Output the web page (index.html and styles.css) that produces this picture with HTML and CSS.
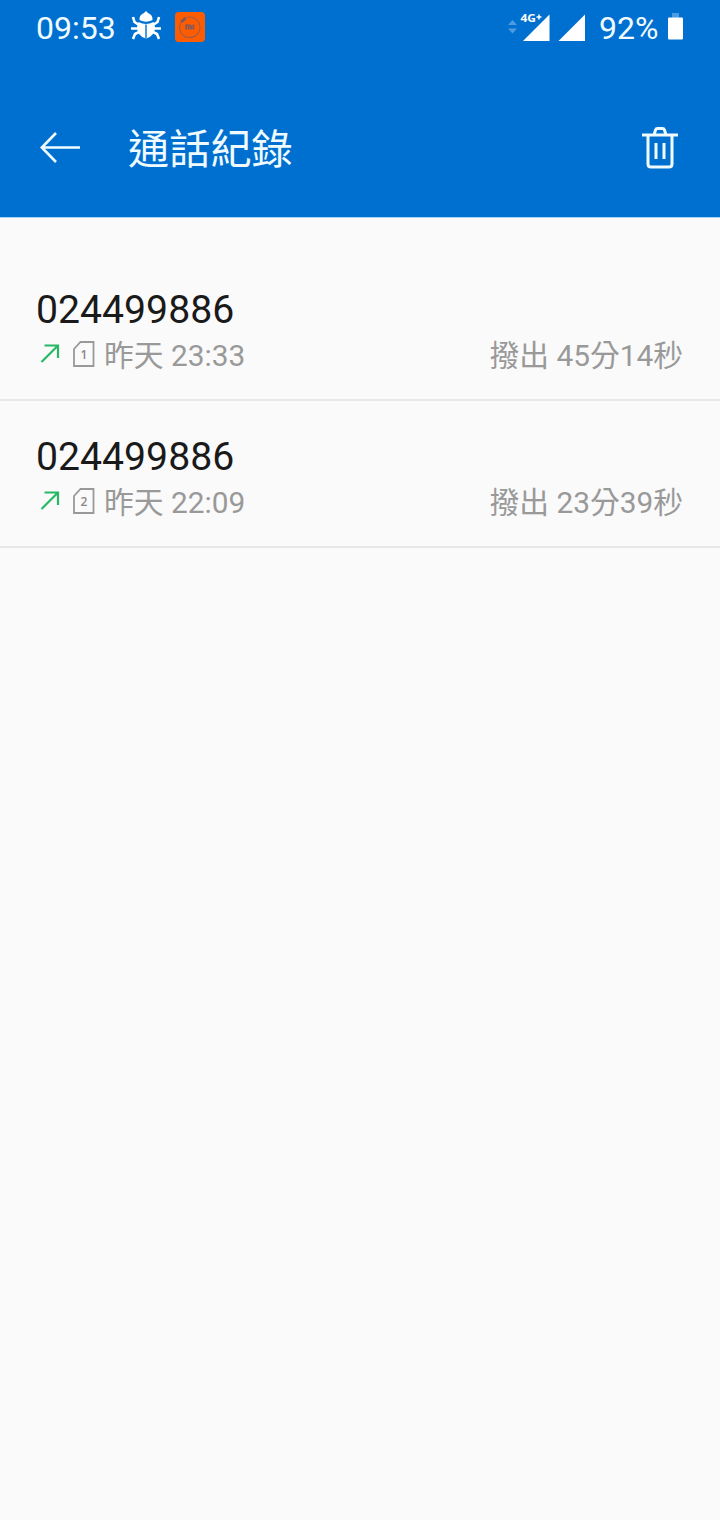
FILE: index.html
```html
<!DOCTYPE html>
<html lang="zh-Hant">
  <head>
    <meta charset="utf-8" />
    <title>通話紀錄</title>
    <meta
      name="viewport"
      content="width=device-width, initial-scale=1.0"
    />
    <link rel="stylesheet" href="styles.css">
  </head>
  <body>
    <header class="header">
      <div class="status-bar">
        <span class="clock">09:53</span>
        <svg class="bug-icon" width="32" height="32" viewBox="0 0 32 32">
          <path d="M9.500 10 Q9 5 14 3 L16 1 L18 3 Q23 5 22.500 10 Q16 13.500 9.500 10Z" fill="#fff" />
          <path d="M8.500 12 Q16 16 23.500 12 L25 17 Q25 26 16 28.500 Q7 26 7 17Z" fill="#fff" />
          <path d="M9 15 L4.500 12 L3 7 M8 18.500 H1 M9 22 L5 24 L3 29 M23 15 L27.500 12 L29 7 M24 18.500 H31 M23 22 L27 24 L29 29" fill="none" stroke="#fff" stroke-width="2.600" />
          <path d="M16 14.500 V28" fill="none" stroke="#0070d0" stroke-width="1.400" />
        </svg>
        <svg class="mi-icon" width="30" height="30" viewBox="0 0 30 30">
          <rect width="30" height="30" rx="4" fill="#ff5c00" />
          <path d="M9.500 6.600 A10.200 10.200 0 1 1 5.800 10.500" fill="none" stroke="#9c5c50" stroke-width="1.100" />
          <path d="M6.300 10 L10.500 5.900" stroke="#755966" stroke-width="2.600" />
          <path d="M11.200 17.500 V13.300 H14.500 Q16 13.300 16 14.800 V17.500 M13.600 14.800 V17.500 M18.400 12.600 V17.500" fill="none" stroke="#755966" stroke-width="1.700" />
        </svg>

        <div class="status-right">
          <svg width="80" height="32" viewBox="0 0 80 32">
            <path d="M3 14 L7.500 9 L12 14Z M3 17.500 L7.500 22.500 L12 17.500Z" fill="#4d9be0" />
            <path d="M18 30 L44.500 3.500 V30Z M53.500 30 L80 3.500 V30Z" fill="#fff" />
            <text class="network" x="15.500" y="11" textLength="15.500" lengthAdjust="spacingAndGlyphs">4G</text>
            <path d="M31.500 6 H36.500 M34 3.500 V8.500" stroke="#fff" stroke-width="1.500" />
          </svg>
          <span class="battery-level">92%</span>
          <svg width="15" height="28" viewBox="0 0 15 28">
            <rect x="4" y="0" width="7" height="5" fill="#4d9be0" />
            <rect x="0" y="4.500" width="15" height="22" rx="1" fill="#fff" />
          </svg>
        </div>
      </div>

      <div class="toolbar">
        <svg width="40" height="32" viewBox="0 0 40 32">
          <path d="M40 15.500 H2 M16 1 L1.800 15.500 L16 30" fill="none" stroke="#f0fbff" stroke-width="2.600" />
        </svg>
        <h1>通話紀錄</h1>
        <svg class="trash-icon" width="36" height="42" viewBox="0 0 36 42">
          <path d="M0 8 H36 M6 8 V37 Q6 40 9 40 H27 Q30 40 30 37 V8 M12 8 L13.500 3 Q14 1.600 15.500 1.600 H20.500 Q22 1.600 22.500 3 L24 8 M14 16 V32 M22 16 V32" fill="none" stroke="#f0fbff" stroke-width="3" />
        </svg>
      </div>
    </header>

    <main class="call-list">
      <div class="call">
        <div class="number">024499886</div>
        <div class="details">
          <svg class="outgoing" width="20" height="20" viewBox="0 0 20 20">
            <path d="M1.500 18 L18 1.500 M4.500 1.500 H18 V14" />
          </svg>
          <svg class="sim" width="22" height="27" viewBox="0 0 22 27">
            <path d="M7.500 1 H20.500 V25 H1 V8Z" />
            <text x="11" y="17.500">1</text>
          </svg>
          <span class="time">昨天 23:33</span>
          <span class="duration">撥出 45分14秒</span>
        </div>
      </div>

      <div class="call">
        <div class="number">024499886</div>
        <div class="details">
          <svg class="outgoing" width="20" height="20" viewBox="0 0 20 20">
            <path d="M1.500 18 L18 1.500 M4.500 1.500 H18 V14" />
          </svg>
          <svg class="sim" width="22" height="27" viewBox="0 0 22 27">
            <path d="M7.500 1 H20.500 V25 H1 V8Z" />
            <text x="11" y="17.500">2</text>
          </svg>
          <span class="time">昨天 22:09</span>
          <span class="duration">撥出 23分39秒</span>
        </div>
      </div>
    </main>
  </body>
</html>
```

FILE: styles.css
```css
* {
  box-sizing: border-box;
}

body {
  margin: 0;
  min-height: 100vh;
  background-color: #fafafa;
  font-family: Roboto, "Noto Sans CJK TC", sans-serif;
}

svg {
  display: block;
  flex: none;
}

.header {
  height: 218px;
  background-color: #0070d0;
  color: #f0fbff;
  border-bottom: 1px solid #a5d6f5;
}

.status-bar {
  display: flex;
  align-items: center;
  height: 54px;
  padding: 0 37px 0 36px;
  font-size: 32px;
  line-height: 54px;
}

.clock {
  width: 80px;
  padding-top: 1px;
}

.bug-icon {
  margin-left: 14px;
  margin-top: -2px;
}

.mi-icon {
  margin-left: 13px;
}

.status-right {
  display: flex;
  align-items: center;
  margin-left: auto;
}

.battery-level {
  width: 60px;
  margin-left: 14px;
  margin-right: 9px;
  padding-top: 1px;
}

.network {
  font-family: "Open Sans", sans-serif;
  font-size: 11px;
  font-weight: bold;
  fill: #fff;
}

.toolbar {
  display: flex;
  align-items: center;
  height: 109px;
  margin-top: 39px;
  padding: 0 42px 0 40px;
}

h1 {
  margin: 0 0 0 48px;
  padding-top: 5px;
  font-size: 41.2px;
  font-weight: 400;
  line-height: 60px;
}

.trash-icon {
  margin-left: auto;
}

.call-list {
  padding-top: 36px;
}

.call {
  height: 147px;
  padding: 32px 37px 0 36px;
  border-bottom: 2px solid #e8e8e8;
}

.number {
  color: #1a1a1a;
  font-size: 39.2px;
  line-height: 48px;
}

.details {
  display: flex;
  align-items: center;
  height: 40px;
  color: #999;
  font-size: 29.8px;
  line-height: 40px;
}

.outgoing {
  margin-left: 4px;
}

.outgoing path {
  fill: none;
  stroke: #26b864;
  stroke-width: 2.2;
}

.sim {
  margin-left: 13px;
}

.sim path {
  fill: none;
  stroke: #999;
  stroke-width: 1.8;
}

.sim text {
  fill: #888;
  font-family: "Open Sans", sans-serif;
  font-size: 12px;
  font-weight: 600;
  text-anchor: middle;
}

.time,
.duration {
  padding-top: 3px;
}

.time {
  margin-left: 9px;
}

.duration {
  margin-left: auto;
}
```
